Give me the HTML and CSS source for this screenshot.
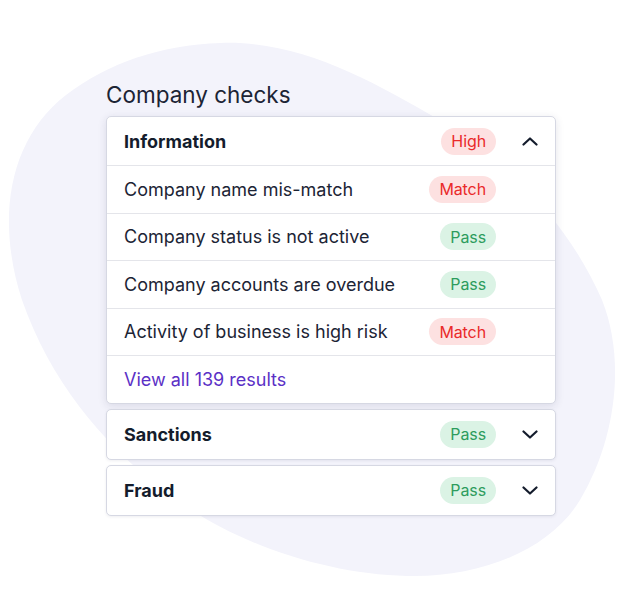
FILE: index.html
```html
<!DOCTYPE html>
<html>

<head>
    <title>Company checks</title>
    <link rel="stylesheet" href="styles.css">
</head>

<body>
    <div class="stage">
        <svg class="blob" viewBox="0 0 617 600" width="617" height="600">
            <path d="M221 43 C300 40 370 80 440 120 C510 160 572 230 602 300 C626 360 616 440 580 500 C550 550 480 578 407 576 C320 574 225 540 160 488 C100 440 50 380 22 300 C-4 220 8 140 66 95 C108 63 160 45 221 43 Z" fill="#f3f3fb" />
        </svg>

        <div class="checks">
            <h2 class="checks-title">Company checks</h2>

            <div class="check-card open">
                <div class="card-head">
                    <span class="card-name">Information</span>
                    <span class="badge red">High</span>
                    <svg class="chevron" viewBox="0 0 16 9" width="16" height="9">
                        <path d="M1.5 7.5 L8 1.5 L14.5 7.5" />
                    </svg>
                </div>
                <div class="check-row">
                    <span class="row-label">Company name mis-match</span>
                    <span class="badge red">Match</span>
                </div>
                <div class="check-row">
                    <span class="row-label">Company status is not active</span>
                    <span class="badge green">Pass</span>
                </div>
                <div class="check-row">
                    <span class="row-label">Company accounts are overdue</span>
                    <span class="badge green">Pass</span>
                </div>
                <div class="check-row">
                    <span class="row-label">Activity of business is high risk</span>
                    <span class="badge red">Match</span>
                </div>
                <div class="check-row">
                    <a class="view-all" href="#">View all 139 results</a>
                </div>
            </div>

            <div class="check-card">
                <div class="card-head">
                    <span class="card-name">Sanctions</span>
                    <span class="badge green">Pass</span>
                    <svg class="chevron" viewBox="0 0 16 9" width="16" height="9">
                        <path d="M1.5 1.5 L8 7.5 L14.5 1.5" />
                    </svg>
                </div>
            </div>

            <div class="check-card">
                <div class="card-head">
                    <span class="card-name">Fraud</span>
                    <span class="badge green">Pass</span>
                    <svg class="chevron" viewBox="0 0 16 9" width="16" height="9">
                        <path d="M1.5 1.5 L8 7.5 L14.5 1.5" />
                    </svg>
                </div>
            </div>
        </div>
    </div>
</body>

</html>
```

FILE: styles.css
```css
* {
    box-sizing: border-box;
}

body {
    margin: 0;
    font-family: Inter, "Noto Sans", sans-serif;
    color: #1b2334;
    background-color: #ffffff;
}

.stage {
    position: relative;
    width: 617px;
    height: 600px;
    overflow: hidden;
}

.blob {
    position: absolute;
    left: 0;
    top: 0;
}

.checks {
    position: relative;
    display: flex;
    flex-direction: column;
    gap: 5px;
    width: 450px;
    margin-left: 106px;
    padding-top: 80px;
}

.checks-title {
    margin: 0 0 1px 0;
    font-size: 22.5px;
    line-height: 30px;
    font-weight: 400;
    color: #1c2435;
}

.check-card {
    background-color: #ffffff;
    border: 1px solid #d6d8e3;
    border-radius: 5px;
    box-shadow: 0 1px 3px rgba(40, 44, 80, 0.08);
}

.check-card.open {
    box-shadow: 0 2px 8px rgba(40, 44, 80, 0.12);
}

.card-head {
    display: flex;
    align-items: center;
    height: 49px;
    padding: 0 17px 0 17px;
}

.open .card-head {
    height: 48px;
}

.card-name {
    flex: 1;
    font-size: 18px;
    font-weight: 700;
    color: #141c2c;
}

.chevron {
    margin-left: 26px;
    fill: none;
    stroke: #141c2c;
    stroke-width: 2.2;
    stroke-linecap: round;
    stroke-linejoin: round;
}

.check-row {
    display: flex;
    align-items: center;
    height: 47.5px;
    padding: 0 59px 0 17px;
    border-top: 1px solid #e4e5ea;
}

.row-label {
    flex: 1;
    font-size: 18px;
    color: #1c2435;
}

.badge {
    display: inline-flex;
    align-items: center;
    justify-content: center;
    height: 27px;
    padding: 0 10px;
    border-radius: 14px;
    font-size: 16px;
    letter-spacing: -0.1px;
}

.badge.red {
    background-color: #fde1e1;
    color: #ea2a2a;
}

.badge.green {
    background-color: #dbf3e5;
    color: #2d9c5d;
}

.view-all {
    font-size: 18px;
    color: #5b30c6;
    text-decoration: none;
}
```
